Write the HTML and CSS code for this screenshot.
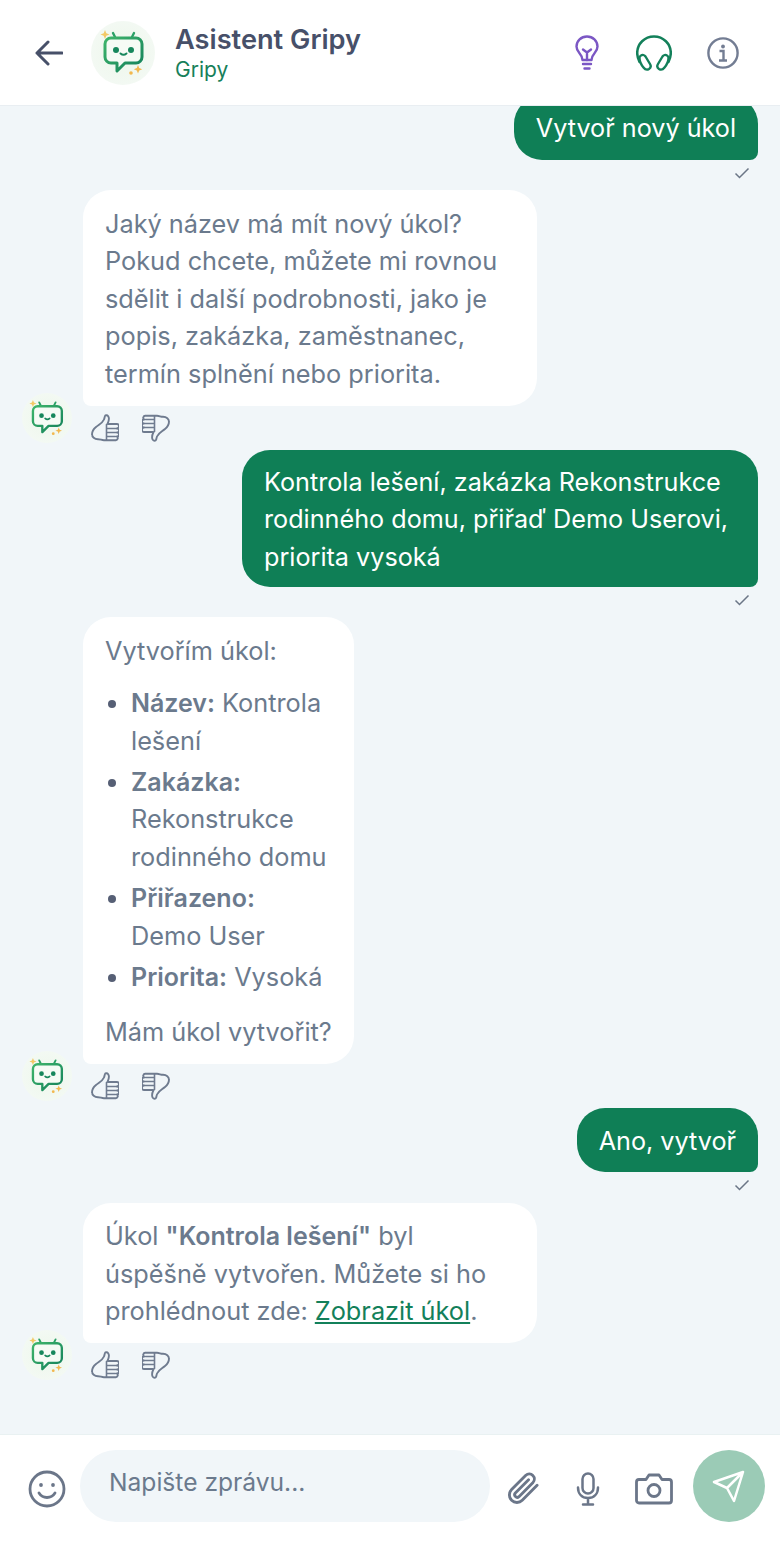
FILE: index.html
```html
<!DOCTYPE html>
<html lang="cs">
<head>
<meta charset="utf-8">
<title>Asistent Gripy</title>
<link rel="stylesheet" href="styles.css">
</head>
<body>
<svg class="defs" width="0" height="0" aria-hidden="true">
  <defs>
    <linearGradient id="botg" x1="0" y1="0" x2="1" y2="1">
      <stop offset="0" stop-color="#3fb56b"/>
      <stop offset="1" stop-color="#13805a"/>
    </linearGradient>
    <radialGradient id="botbg" cx="0.5" cy="0.5" r="0.5">
      <stop offset="0" stop-color="#edf7ea"/>
      <stop offset="1" stop-color="#f3f9f3"/>
    </radialGradient>
    <symbol id="bot" viewBox="0 0 64 64">
      <circle cx="32" cy="32" r="32" fill="url(#botbg)"/>
      <path d="M24 16l-2-4M41 16l2-4" fill="none" stroke="#2ba066" stroke-width="2.400" stroke-linecap="round"/>
      <path d="M20 17h25a6 6 0 0 1 6 6v13a6 6 0 0 1-6 6H34l-8 8v-8h-6a6 6 0 0 1-6-6V23a6 6 0 0 1 6-6z" fill="#f6fbf5" stroke="url(#botg)" stroke-width="3" stroke-linejoin="round"/>
      <circle cx="25" cy="29" r="3" fill="#17875c"/>
      <circle cx="40" cy="29" r="3" fill="#17875c"/>
      <path d="M29.500 32.500q3 2.500 6 0" fill="none" stroke="#17875c" stroke-width="2" stroke-linecap="round"/>
      <path d="M14 9l1.300 3.200 3.200 1.300-3.200 1.300L14 18l-1.300-3.200-3.200-1.300 3.200-1.300z" fill="#f3c966"/>
      <path d="M47 44l1.200 3 3 1.200-3 1.200-1.200 3-1.200-3-3-1.200 3-1.200z" fill="#f2b84f"/>
      <circle cx="40" cy="52" r="1.800" fill="#f2b84f"/>
    </symbol>
    <symbol id="thumb" viewBox="0 0 28 28">
      <path d="M1 20.500c0-3.500 1.500-5.500 4-7.500 3.500-2.800 6.500-4 8-7.500.5-1.200.6-2.500 1-3.500.4-1 2.300-1 3.200.2 1.200 1.800.6 5-.7 7.800h9a2.250 2.250 0 0 1 .5 4.500 2 2 0 0 1 .2 4 2 2 0 0 1-.4 4 2 2 0 0 1-1.200 3.700H13c-2.500 0-3.500-1-6-1-3.500 0-6-2-6-5.200z" fill="none" stroke="#6f7b8f" stroke-width="1.900" stroke-linejoin="round"/>
      <path d="M15.500 10.500V26M16 14.500h9.500M16 18.500h9.500M16 22.500h8.500" fill="none" stroke="#6f7b8f" stroke-width="1.600" stroke-linecap="round"/>
    </symbol>
  </defs>
</svg>

<div class="app">
  <header class="topbar">
    <svg class="back" viewBox="0 0 28 26" width="28" height="26">
      <path d="M27 13H2M13 2L2 13l11 11" fill="none" stroke="#475069" stroke-width="3" stroke-linecap="round" stroke-linejoin="round"/>
    </svg>
    <svg class="head-avatar" width="64" height="64"><use href="#bot"/></svg>
    <div class="titles">
      <div class="title">Asistent Gripy</div>
      <div class="subtitle">Gripy</div>
    </div>
    <div class="actions">
      <svg class="bulb" width="24" height="36" viewBox="0 0 24 36">
        <path d="M7.500 25c0-3-1-4.500-3-6.800C2.500 16 1.500 13.500 1.500 11.500 1.500 5.700 6.200 1.500 12 1.500s10.500 4.200 10.500 10c0 2-1 4.500-3 6.700-2 2.300-3 3.800-3 6.800z" fill="none" stroke="#7b57c4" stroke-width="2.400" stroke-linejoin="round"/>
        <path d="M8 14.500l4 3 4-3M12 17.500V25M8 29h8M9.500 33.500h5" fill="none" stroke="#7b57c4" stroke-width="2.400" stroke-linecap="round" stroke-linejoin="round"/>
      </svg>
      <svg width="36" height="36" viewBox="0 0 36 36">
        <path d="M3.500 27C1.800 23.500 1.200 21 1.200 18 1.200 8.700 8.700 1.500 18 1.500S34.800 8.700 34.800 18c0 3-.6 5.500-2.300 9" fill="none" stroke="#13805a" stroke-width="2.500" stroke-linecap="round"/>
        <path d="M5 20.500c1.500-1 3.500-.5 4.500 1l4.500 7.500c1.200 2 .5 4-1 5-1.700 1-4 .5-5.500-1.500-2.500-3-4-7-4-9.500 0-1 .5-2 1.500-2.500zM31 20.500c-1.500-1-3.500-.5-4.500 1L22 29c-1.200 2-.5 4 1 5 1.700 1 4 .5 5.500-1.500 2.500-3 4-7 4-9.500 0-1-.5-2-1.500-2.500z" fill="none" stroke="#13805a" stroke-width="2.400" stroke-linejoin="round"/>
      </svg>
      <svg width="32" height="32" viewBox="0 0 32 32">
        <circle cx="16" cy="16" r="14.600" fill="none" stroke="#737d93" stroke-width="2.400"/>
        <circle cx="16" cy="9.500" r="1.900" fill="#737d93"/>
        <path d="M12.500 14h4v9M12 23.500h8" fill="none" stroke="#737d93" stroke-width="2.400"/>
      </svg>
    </div>
  </header>

  <main class="chat">
    <div class="msg-user">
      <div class="bubble-user">Vytvoř nový úkol</div>
      <svg class="tick" width="16" height="12" viewBox="0 0 16 12"><path d="M1.500 6.500l4 4 9-9" fill="none" stroke="#6b7687" stroke-width="1.500"/></svg>
    </div>

    <div class="msg-bot">
      <svg class="avatar" width="50" height="50"><use href="#bot"/></svg>
      <div class="bot-body">
        <div class="bubble-bot">Jaký název má mít nový úkol? Pokud chcete, můžete mi rovnou sdělit i další podrobnosti, jako je popis, zakázka, zaměstnanec, termín splnění nebo priorita.</div>
        <div class="reactions">
          <svg width="28" height="28"><use href="#thumb"/></svg>
          <svg class="down" width="28" height="28"><use href="#thumb"/></svg>
        </div>
      </div>
    </div>

    <div class="msg-user">
      <div class="bubble-user">Kontrola lešení, zakázka Rekonstrukce rodinného domu, přiřaď Demo Userovi, priorita vysoká</div>
      <svg class="tick" width="16" height="12" viewBox="0 0 16 12"><path d="M1.500 6.500l4 4 9-9" fill="none" stroke="#6b7687" stroke-width="1.500"/></svg>
    </div>

    <div class="msg-bot">
      <svg class="avatar" width="50" height="50"><use href="#bot"/></svg>
      <div class="bot-body">
        <div class="bubble-bot bubble-narrow">
          <p class="para">Vytvořím úkol:</p>
          <ul class="list">
            <li><strong>Název:</strong> Kontrola lešení</li>
            <li><strong>Zakázka:</strong> Rekonstrukce rodinného domu</li>
            <li><strong>Přiřazeno:</strong> <span class="nowrap">Demo User</span></li>
            <li><strong>Priorita:</strong> Vysoká</li>
          </ul>
          <p class="para">Mám úkol vytvořit?</p>
        </div>
        <div class="reactions">
          <svg width="28" height="28"><use href="#thumb"/></svg>
          <svg class="down" width="28" height="28"><use href="#thumb"/></svg>
        </div>
      </div>
    </div>

    <div class="msg-user">
      <div class="bubble-user">Ano, vytvoř</div>
      <svg class="tick" width="16" height="12" viewBox="0 0 16 12"><path d="M1.500 6.500l4 4 9-9" fill="none" stroke="#6b7687" stroke-width="1.500"/></svg>
    </div>

    <div class="msg-bot">
      <svg class="avatar" width="50" height="50"><use href="#bot"/></svg>
      <div class="bot-body">
        <div class="bubble-bot">Úkol <strong>"Kontrola lešení"</strong> byl úspěšně vytvořen. Můžete si ho prohlédnout zde: <a class="link" href="#">Zobrazit úkol</a>.</div>
        <div class="reactions">
          <svg width="28" height="28"><use href="#thumb"/></svg>
          <svg class="down" width="28" height="28"><use href="#thumb"/></svg>
        </div>
      </div>
    </div>
  </main>

  <footer class="composer">
    <svg class="emoji" width="38" height="38" viewBox="0 0 38 38">
      <circle cx="19" cy="19" r="17" fill="none" stroke="#6b7689" stroke-width="2.800"/>
      <circle cx="13" cy="15" r="1.900" fill="#6b7689"/>
      <circle cx="25" cy="15" r="1.900" fill="#6b7689"/>
      <path d="M11 23c2 3.200 5 4.500 8 4.500s6-1.300 8-4.500" fill="none" stroke="#6b7689" stroke-width="2.800" stroke-linecap="round"/>
    </svg>
    <div class="input">Napište zprávu...</div>
    <div class="tools">
      <svg width="36" height="36" viewBox="0 0 24 24"><path d="M21.400 9.500l-9.900 10a5 5 0 0 1-7.100-7.100l9.500-9.600a3.400 3.400 0 0 1 4.800 4.800l-9.400 9.500a1.700 1.700 0 0 1-2.400-2.400l8.800-8.900" fill="none" stroke="#6b7689" stroke-width="1.900" stroke-linecap="round" stroke-linejoin="round"/></svg>
      <svg width="26" height="34" viewBox="0 0 26 34">
        <rect x="7.500" y="1.500" width="11" height="20" rx="5.500" fill="none" stroke="#6b7689" stroke-width="2.500"/>
        <path d="M3 15.500c0 6.500 4 10.500 10 10.500s10-4 10-10.500M13 26v6.500M8 32.500h10" fill="none" stroke="#6b7689" stroke-width="2.500" stroke-linecap="round"/>
      </svg>
      <svg width="38" height="32" viewBox="0 0 38 32">
        <path d="M4 6.500h7l3-4.500h10l3 4.500h7a2.500 2.500 0 0 1 2.500 2.500v18.500a2.500 2.500 0 0 1-2.500 2.500H4a2.500 2.500 0 0 1-2.500-2.500V9A2.500 2.500 0 0 1 4 6.500z" fill="none" stroke="#6b7689" stroke-width="2.800" stroke-linejoin="round"/>
        <circle cx="19" cy="17.500" r="6" fill="none" stroke="#6b7689" stroke-width="2.800"/>
      </svg>
    </div>
    <div class="send">
      <svg width="36" height="36" viewBox="0 0 36 36"><path d="M32 4L3 14l13 6 7 13zM32 4L16 20" fill="none" stroke="#fff" stroke-width="2.500" stroke-linejoin="round" stroke-linecap="round"/></svg>
    </div>
  </footer>
</div>
</body>
</html>
```

FILE: styles.css
```css
* { box-sizing: border-box; }
html, body { margin: 0; padding: 0; }
body {
  font-family: Inter, "Noto Sans", sans-serif;
  font-size: 25.3px;
  line-height: 37.4px;
  color: #6b7a8d;
  background: #f1f6f9;
}
.defs { display: block; height: 0; }
.app {
  width: 780px;
  height: 1560px;
  display: flex;
  flex-direction: column;
  overflow: hidden;
}
.topbar {
  flex: none;
  height: 106px;
  background: #fff;
  border-bottom: 1px solid #e9eef2;
  display: flex;
  align-items: center;
  padding: 0 41px 0 35px;
}
.back { flex: none; }
.head-avatar { flex: none; margin-left: 28px; }
.titles { margin-left: 20px; padding-top: 2px; display: flex; flex-direction: column; }
.title { font-size: 27.2px; line-height: 32px; font-weight: 600; color: #475069; }
.subtitle { font-size: 21px; line-height: 28px; color: #17805a; }
.actions { margin-left: auto; display: flex; align-items: center; gap: 35px; }
.bulb { margin-right: 2px; }

.chat {
  flex: 1;
  min-height: 0;
  overflow: hidden;
  display: flex;
  flex-direction: column;
  justify-content: flex-end;
  padding: 0 22px 47px;
}
.msg-user { flex: none; display: flex; flex-direction: column; align-items: flex-end; }
.bubble-user {
  max-width: 516px;
  min-height: 64px;
  padding: 14.500px 22px 10.500px;
  background: #0f7f56;
  color: #fff;
  font-size: 25.2px;
  border-radius: 28px 28px 8px 28px;
}
.tick { margin: 7px 8px 11.500px 0; display: block; }
.msg-bot { flex: none; display: flex; align-items: flex-end; gap: 11px; margin-bottom: 7px; }
.avatar { flex: none; }
.bot-body { display: flex; flex-direction: column; align-items: flex-start; }
.bubble-bot {
  width: 454px;
  padding: 14.500px 22px 13.500px;
  background: #fff;
  border-radius: 28px 28px 28px 8px;
}
.bubble-narrow { width: 271px; }
.para { margin: 0; }
.list { margin: 15px 0 18px; padding: 0 0 0 26px; }
.list li { margin-bottom: 4px; }
.list li:last-child { margin-bottom: 0; }
.list li::marker { color: #565f75; }
strong { font-size: 25px; line-height: 1; font-weight: 600; }
.nowrap { white-space: nowrap; }
.link { color: #13805a; text-decoration: underline; }
.reactions { height: 37px; display: flex; align-items: flex-end; gap: 23px; padding: 0 0 1px 8px; }
.down { transform: rotate(180deg); }

.composer {
  flex: none;
  height: 126px;
  background: #fff;
  border-top: 1px solid #e9f1f2;
  display: flex;
  align-items: flex-start;
  padding: 15px 15px 0 28px;
}
.emoji { flex: none; margin-top: 20px; }
.input {
  flex: none;
  width: 410px;
  height: 72px;
  margin-left: 14px;
  padding: 0 29px 6px;
  border-radius: 36px;
  background: #f1f6f9;
  display: flex;
  align-items: center;
  font-size: 24.6px;
  color: #6b7a8d;
}
.tools { flex: none; display: flex; align-items: center; gap: 34px; height: 72px; margin-left: 15px; padding-top: 6px; }
.send {
  flex: none;
  width: 72px;
  height: 72px;
  margin-left: auto;
  border-radius: 50%;
  background: #9bcbb6;
  display: flex;
  align-items: center;
  justify-content: center;
}
```
